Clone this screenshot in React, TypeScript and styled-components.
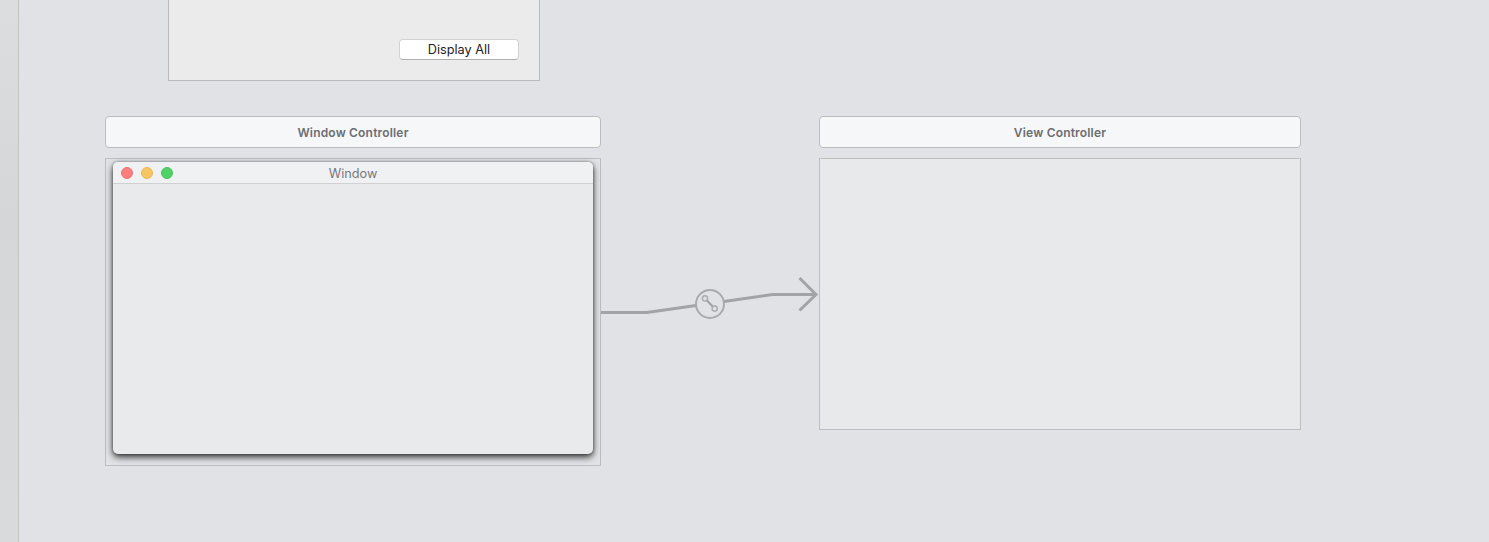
import React from "react";
import styled, { createGlobalStyle } from "styled-components";

const GlobalStyle = createGlobalStyle`
  html, body {
    margin: 0;
    padding: 0;
    overflow: hidden;
    background: #e1e2e6;
    font-family: Inter, "Liberation Sans", Arial, sans-serif;
  }
`;

const Editor = styled.div`
  display: flex;
  width: 1489px;
  height: 542px;
  overflow: hidden;
`;

const Gutter = styled.div`
  flex: 0 0 18px;
  background: linear-gradient(#dcdddf, #d5d6d8 40%, #d9dadc);
  border-right: 1px solid #c2c3c6;
`;

// storyboard canvas: scenes sit at free positions
const Canvas = styled.div`
  position: relative;
  flex: 1;
  background: #e1e2e6;
`;

const Scene = styled.div<{ $left: number; $top: number; $width: number }>`
  position: absolute;
  left: ${(p) => p.$left}px;
  top: ${(p) => p.$top}px;
  width: ${(p) => p.$width}px;
  display: flex;
  flex-direction: column;
  gap: 10px;
`;

const SceneBar = styled.div`
  box-sizing: border-box;
  height: 32px;
  padding-top: 1px;
  display: flex;
  align-items: center;
  justify-content: center;
  background: #f6f7f9;
  border: 1px solid #bcbdc0;
  border-radius: 4px;
  font-size: 12px;
  font-weight: 600;
  letter-spacing: 0.18px;
  color: #6c6d72;
`;

const SceneFrame = styled.div<{ $height: number }>`
  box-sizing: border-box;
  height: ${(p) => p.$height}px;
  background: #e8e9eb;
  border: 1px solid #bdbec0;
`;

const WindowFrame = styled(SceneFrame)`
  background: #e2e3e6;
  padding: 3px 7px 10px 7px;
`;

const MacWindow = styled.div`
  height: 292px;
  display: flex;
  flex-direction: column;
  background: #e9eaec;
  border-radius: 5px;
  box-shadow: 0 3px 7px rgba(0, 0, 0, 0.8), 0 0 3px rgba(0, 0, 0, 0.35);
`;

const TitleBar = styled.div`
  position: relative;
  box-sizing: border-box;
  height: 22px;
  padding-top: 1px;
  display: flex;
  align-items: center;
  justify-content: center;
  background: #f0f1f3;
  border-bottom: 1px solid #d0d1d3;
  border-radius: 5px 5px 0 0;
  font-size: 12.7px;
  color: #77787c;
`;

const Lights = styled.div`
  position: absolute;
  left: 8px;
  top: 5px;
  display: flex;
  gap: 8px;
`;

const Light = styled.span<{ $fill: string; $edge: string }>`
  box-sizing: border-box;
  width: 12px;
  height: 12px;
  border-radius: 50%;
  background: ${(p) => p.$fill};
  border: 1px solid ${(p) => p.$edge};
`;

const TopScene = styled.div`
  position: absolute;
  left: 149px;
  top: -10px;
  box-sizing: border-box;
  width: 372px;
  height: 91px;
  display: flex;
  align-items: flex-end;
  justify-content: flex-end;
  padding: 0 20px 20px 0;
  background: #ebebeb;
  border: 1px solid #b9babc;
`;

const PushButton = styled.button`
  box-sizing: border-box;
  width: 120px;
  height: 21px;
  padding: 0 0 1px;
  background: #ffffff;
  border: 1px solid #d2d2d4;
  border-bottom-color: #b0b0b2;
  border-radius: 4px;
  font-family: inherit;
  font-size: 12.7px;
  color: #222226;
`;

const Segue = styled.svg`
  position: absolute;
  left: 582px;
  top: 270px;
  overflow: visible;
`;

export default function App() {
  return (
    <Editor>
      <GlobalStyle />
      <Gutter />
      <Canvas>
        <TopScene>
          <PushButton>Display All</PushButton>
        </TopScene>

        <Scene $left={86} $top={116} $width={496}>
          <SceneBar>Window Controller</SceneBar>
          <WindowFrame $height={308}>
            <MacWindow>
              <TitleBar>
                <Lights>
                  <Light $fill="#fc7f7d" $edge="#ec7370" />
                  <Light $fill="#f8c660" $edge="#e9b85a" />
                  <Light $fill="#50d266" $edge="#48c35d" />
                </Lights>
                Window
              </TitleBar>
            </MacWindow>
          </WindowFrame>
        </Scene>

        <Scene $left={800} $top={116} $width={482}>
          <SceneBar>View Controller</SceneBar>
          <SceneFrame $height={272} />
        </Scene>

        <Segue width="220" height="60" viewBox="0 0 220 60" fill="none">
          <g stroke="#a2a3a6" strokeWidth="3">
            <path d="M0 42.5H45.7L95 35.4" />
            <path d="M123 31.4L171.7 24.5H214" />
            <path d="M198.5 8L215 24.5L198.5 40.5" />
          </g>
          <g stroke="#a9aaad">
            <circle cx="109" cy="34" r="14" strokeWidth="2" />
            <path d="M105.8 30.2L111.9 36.8" strokeWidth="2" stroke="#a2a3a6" />
            <circle cx="104" cy="28.4" r="2.6" strokeWidth="1.4" />
            <circle cx="113.7" cy="38.6" r="2.6" strokeWidth="1.4" />
          </g>
        </Segue>
      </Canvas>
    </Editor>
  );
}
